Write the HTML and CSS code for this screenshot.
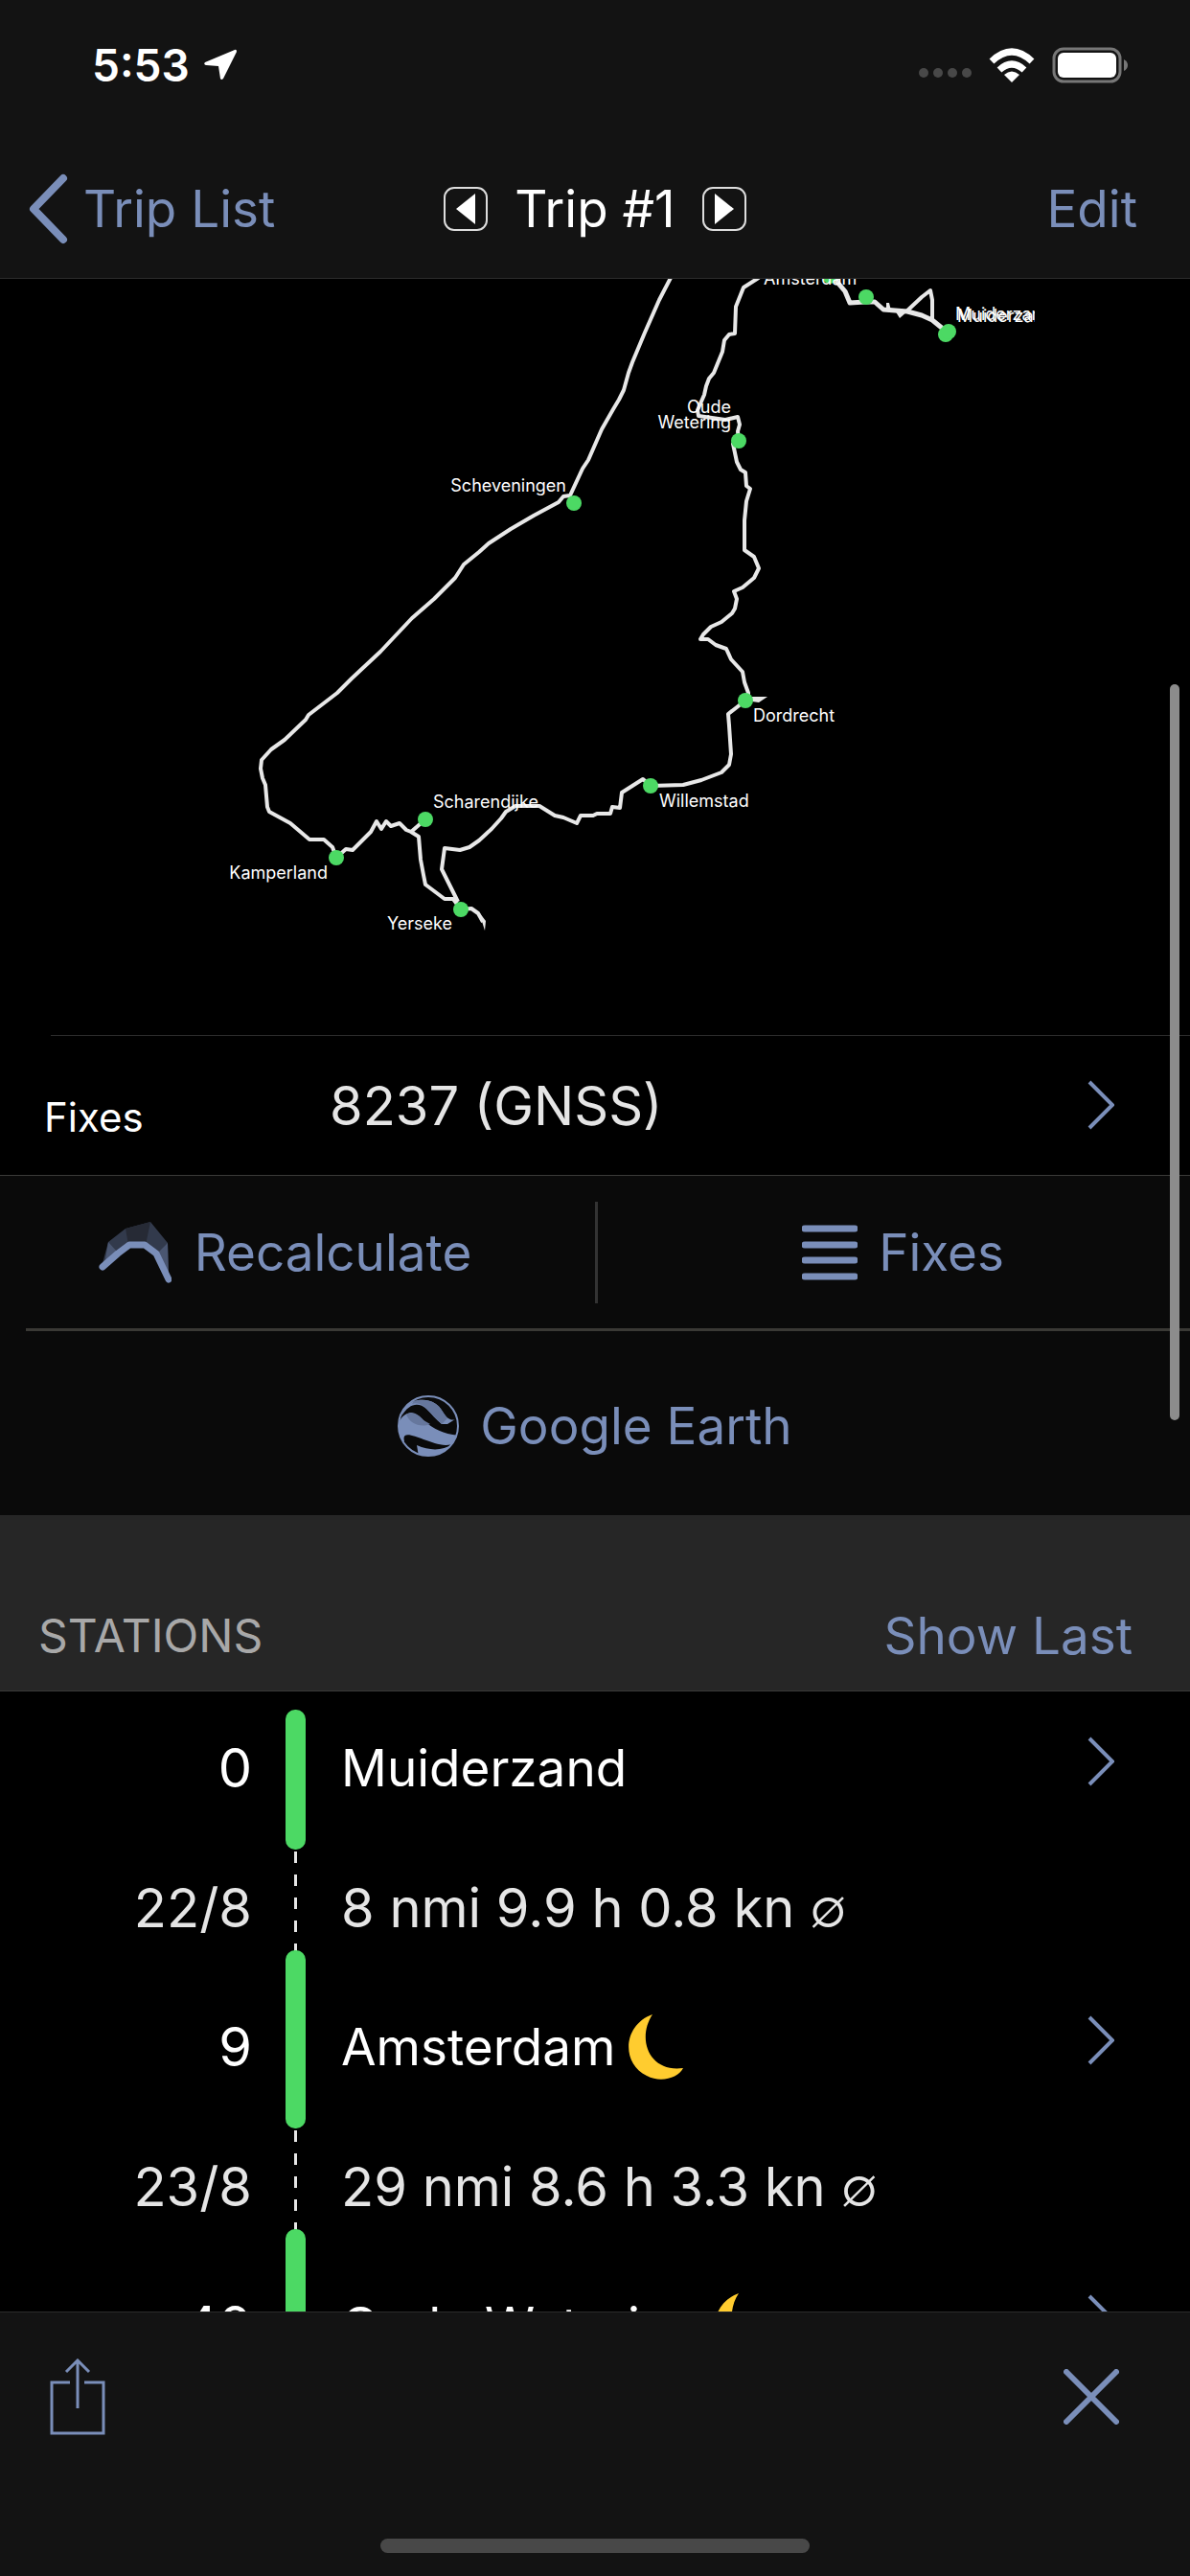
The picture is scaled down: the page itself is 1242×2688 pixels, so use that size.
FILE: index.html
```html
<!DOCTYPE html>
<html lang="en">
<head>
    <meta charset="UTF-8">
    <meta name="viewport" content="width=device-width, initial-scale=1.0">
    <title>Trip #1</title>
    <link rel="stylesheet" href="styles.css">
</head>
<body>
    <header>
        <div class="status-bar">
            <div class="status-left">
                <span>5:53</span>
                <svg width="36" height="34" viewBox="0 0 36 34"><path d="M33 1 L2 14 Q0 16 3 17 L16 18 L18 31 Q19 33 21 31 L35 3 Q35 0 33 1 Z" fill="#fff"/></svg>
            </div>
            <div class="status-right">
                <span class="signal"><i></i><i></i><i></i><i></i></span>
                <svg width="48" height="37" viewBox="0 0 48 37">
                    <path d="M24 36 L16 28 Q24 21 32 28 Z" fill="#fff"/>
                    <path d="M11 23 Q24 11 37 23" fill="none" stroke="#fff" stroke-width="7"/>
                    <path d="M3 14 Q24 -6 45 14" fill="none" stroke="#fff" stroke-width="7"/>
                </svg>
                <svg width="80" height="38" viewBox="0 0 80 38">
                    <rect x="2" y="2" width="69" height="34" rx="10" fill="none" stroke="#777" stroke-width="3"/>
                    <rect x="6" y="6" width="61" height="26" rx="6" fill="#fff"/>
                    <path d="M75 13 Q79 15 79 19 Q79 23 75 25 Z" fill="#777"/>
                </svg>
            </div>
        </div>
        <nav>
            <a href="#trips" class="back">
                <svg width="42" height="74" viewBox="0 0 42 74"><path d="M37 5 L6 37 L37 69" fill="none" stroke="#7a8eb9" stroke-width="8" stroke-linecap="round" stroke-linejoin="round"/></svg>
                Trip List
            </a>
            <div class="trip-title">
                <button type="button" class="step" aria-label="Previous trip"><svg width="20" height="32" viewBox="0 0 20 32"><path d="M20 0 V32 L0 16 Z" fill="#fff"/></svg></button>
                <h1>Trip #1</h1>
                <button type="button" class="step" aria-label="Next trip"><svg width="20" height="32" viewBox="0 0 20 32"><path d="M0 0 V32 L20 16 Z" fill="#fff"/></svg></button>
            </div>
            <button type="button" class="edit">Edit</button>
        </nav>
    </header>

    <main>
        <svg class="map" viewBox="0 291 1242 789">
            <defs>
                <clipPath id="label-clip"><rect x="990" y="310" width="90" height="40"/></clipPath>
            </defs>
            <g class="route">
                <!-- North Sea coast -->
                <polyline points="702,286 688,313 673,347 660,378 656,389 651,407 646,417 640,427 628,448 614,480 608,489 595,517 588,518 583,524 557,538 533,552 510,567 500,576 484,589 475,603 453,625 430,645 397,680 367,708 352,723 322,746 319,751 297,772 283,782 273,793 272,802 274,812 277,819 279,842 281,847 303,859 323,876 338,876 347,884 351,895"/>
                <!-- Kamperland to Yerseke -->
                <polyline points="351,895 361,886 368,887 387,868 393,857 398,865 403,857 408,862 417,859 424,866 429,868 437,873 439,897 442,913 444,923 464,938 473,938 481,949 492,948 499,953 504,962"/>
                <polyline points="429,868 444,855"/>
                <!-- Yerseke to Dordrecht -->
                <polyline points="478,941 470,925 461,907 464,885 480,887 490,884 500,877 513,865 523,854 528,847 538,841 563,841 579,851 588,853 602,859 606,851 619,851 623,849 637,849 639,842 647,843 649,827 671,813 679,820 713,819 732,814 753,806 761,798 763,787 761,757 760,745 778,731"/>
                <!-- Dordrecht to Amsterdam -->
                <polyline points="781,731 781,723 777,712 775,701 763,688 758,677 747,673 739,667 731,667 734,662 742,654 753,649 764,640 767,635 769,625 766,617 775,613 787,603 792,593 787,581 777,574 777,543 779,523 783,510 779,507 778,493 773,490 769,482 765,463 771,460 770,450 772,443 770,435 757,438 729,434 728,428 735,412 737,403 740,395 745,389 754,367 756,355 761,349 767,348 768,320 776,300 790,291 800,284"/>
                <!-- Amsterdam to Muiderzand -->
                <polyline class="double" points="865,284 882,304 887,316 903,315 913,315 922,323 947,325 962,329 973,334 989,347"/>
                <polyline points="946,325 962,310 971,303 973,313 973,334"/>
            </g>
            <g fill="#e8e8e8">
                <path d="M500 952 L507 961 L506 971 Z"/>
                <path d="M785 727 H801 L792 733 L785 732 Z"/>
                <path d="M934 324 L939 332 L947 325 Z"/>
                <path d="M925 316 H928 L930 324 H925 Z"/>
            </g>
            <g fill="#4cd964">
                <circle cx="599" cy="525" r="8"/>
                <circle cx="444" cy="855" r="8"/>
                <circle cx="351" cy="895" r="8"/>
                <circle cx="481" cy="949" r="8"/>
                <circle cx="679" cy="820" r="8"/>
                <circle cx="778" cy="731" r="8"/>
                <circle cx="771" cy="460" r="8"/>
                <circle cx="866" cy="288" r="8"/>
                <circle cx="904" cy="310" r="8"/>
                <circle cx="987" cy="349" r="8"/>
                <circle cx="990" cy="346" r="8"/>
            </g>
            <g class="labels">
                <text x="797" y="297">Amsterdam</text>
                <text x="591" y="513" text-anchor="end">Scheveningen</text>
                <text x="763" y="431" text-anchor="end">Oude</text>
                <text x="763" y="447" text-anchor="end">Wetering</text>
                <text x="786" y="753">Dordrecht</text>
                <text x="688" y="842">Willemstad</text>
                <text x="452" y="843">Scharendijke</text>
                <text x="342" y="917" text-anchor="end">Kamperland</text>
                <text x="472" y="970" text-anchor="end">Yerseke</text>
                <g clip-path="url(#label-clip)">
                    <text x="997" y="334">Muiderzand</text>
                    <text x="999" y="336">Muiderzand</text>
                </g>
            </g>
        </svg>

        <a href="#fixes" class="fixes-row">
            <span class="fixes-label">Fixes</span>
            <span class="fixes-value">8237 (GNSS)</span>
            <svg class="chevron" width="28" height="52" viewBox="0 0 28 52"><path d="M2 2 L26 26 L2 50"/></svg>
        </a>

        <div class="actions">
            <div class="actions-top">
                <button type="button" class="recalc">
                    <svg width="76" height="64" viewBox="0 0 76 64">
                        <path d="M3 47 L10 21 L28 7 L54 0 L72 22 L73 60 L60 32 L48 24 H30 Z" fill="#323a4c"/>
                        <path d="M28 7 L54 0 L49 24 H31 Z" fill="#262a35"/>
                        <path d="M6 45 L10 21 L19 31 Z M72 22 L73 58 L62 32 Z" fill="#4a5671"/>
                        <path d="M4 47 L20 33 L32 24 H48 L60 33 L73 60" fill="none" stroke="#7a8eb9" stroke-width="7" stroke-linecap="round" stroke-linejoin="round"/>
                    </svg>
                    Recalculate
                </button>
                <button type="button" class="list">
                    <svg width="58" height="60" viewBox="0 0 58 60"><path d="M3 5 H55 M3 22 H55 M3 38 H55 M3 55 H55" stroke="#7a8eb9" stroke-width="7" stroke-linecap="round"/></svg>
                    Fixes
                </button>
            </div>
            <button type="button" class="earth">
                <svg width="64" height="64" viewBox="0 0 64 64">
                    <defs><clipPath id="globe"><circle cx="32" cy="32" r="31"/></clipPath></defs>
                    <g clip-path="url(#globe)">
                        <path d="M0 30 C8 14 18 17 27 26 C38 36 48 40 64 42 V48 C50 56 40 50 27 46 C16 42 4 37 7 48 L0 50 Z" fill="#7a8eb9"/>
                        <path d="M17 6 C32 2 42 8 47 17 C51 24 56 27 60 25 L52 30 L46 30 C40 25 36 20 30 14 C22 7 12 8 4 22 C6 14 11 8 17 6 Z" fill="#7a8eb9"/>
                        <path d="M17 6 C32 2 42 8 47 17 L52 24 L46 30 C40 25 36 20 30 14 C26 9 20 7 15 9 Z" fill="#66779d"/>
                        <path d="M9 20 C15 15 22 20 27 26 L34 30 C24 34 13 30 9 20 Z" fill="#66779d"/>
                        <path d="M20 52 C34 58 46 58 58 51 L50 64 H22 Z" fill="#7a8eb9"/>
                    </g>
                    <circle cx="32" cy="32" r="31" fill="none" stroke="#7a8eb9" stroke-width="2"/>
                </svg>
                Google Earth
            </button>
        </div>

        <div class="section-header">
            <h2>STATIONS</h2>
            <button type="button">Show Last</button>
        </div>

        <ul class="stations">
            <li class="station first">
                <span class="num">0</span>
                <span class="bar"></span>
                <span class="name">Muiderzand</span>
                <svg class="chevron" width="28" height="52" viewBox="0 0 28 52"><path d="M2 2 L26 26 L2 50"/></svg>
            </li>
            <li class="leg">
                <span class="num">22/8</span>
                <span class="dash"></span>
                <span class="name">8 nmi 9.9 h 0.8 kn <span class="avg">∅</span></span>
            </li>
            <li class="station">
                <span class="num">9</span>
                <span class="bar"></span>
                <span class="name">Amsterdam<svg width="58" height="70" viewBox="0 0 58 70"><path d="M25 1 C-6 12 -8 52 19 65 C34 73 52 67 57 57 C22 62 8 27 25 1 Z" fill="#ffcc2f"/></svg></span>
                <svg class="chevron" width="28" height="52" viewBox="0 0 28 52"><path d="M2 2 L26 26 L2 50"/></svg>
            </li>
            <li class="leg">
                <span class="num">23/8</span>
                <span class="dash"></span>
                <span class="name">29 nmi 8.6 h 3.3 kn <span class="avg">∅</span></span>
            </li>
            <li class="station">
                <span class="num">40</span>
                <span class="bar"></span>
                <span class="name">Oude Wetering<svg width="58" height="70" viewBox="0 0 58 70"><path d="M25 1 C-6 12 -8 52 19 65 C34 73 52 67 57 57 C22 62 8 27 25 1 Z" fill="#ffcc2f"/></svg></span>
                <svg class="chevron" width="28" height="52" viewBox="0 0 28 52"><path d="M2 2 L26 26 L2 50"/></svg>
            </li>
        </ul>
        <div class="scroll-thumb"></div>
    </main>

    <footer>
        <div class="tools">
            <button type="button" aria-label="Share"><svg width="58" height="80" viewBox="0 0 58 80"><path d="M21 25 H2 V78 H56 V25 H36 M29 52 V2 M17 14 L29 2 L41 14" fill="none" stroke="#7a8eb9" stroke-width="3"/></svg></button>
            <button type="button" aria-label="Close"><svg width="58" height="58" viewBox="0 0 58 58"><path d="M3 3 L55 55 M55 3 L3 55" stroke="#7a8eb9" stroke-width="6" stroke-linecap="round"/></svg></button>
        </div>
        <div class="home-indicator"></div>
    </footer>
</body>
</html>
```

FILE: styles.css
```css
* {
    box-sizing: border-box;
}
body {
    font-family: Inter, "Liberation Sans", sans-serif;
    font-size: 53px;
    line-height: 66px;
    margin: 0;
    height: 100vh;
    display: flex;
    flex-direction: column;
    background-color: #000;
    color: #fff;
}
svg {
    display: block;
    flex-shrink: 0;
}
h1, h2 {
    margin: 0;
    font-size: 53px;
    font-weight: 400;
}
a {
    color: #7a8eb9;
    text-decoration: none;
}
button {
    font: inherit;
    color: #7a8eb9;
    background: none;
    border: 0;
    margin: 0;
    padding: 0;
}
header {
    background-color: #131313;
    border-bottom: 1px solid #2c2c2c;
}
.status-bar {
    display: flex;
    justify-content: space-between;
    align-items: center;
    height: 146px;
    padding: 0 64px 10px 96px;
}
.status-left {
    display: flex;
    align-items: center;
    gap: 14px;
    font-size: 46px;
    font-weight: 600;
}
.status-right {
    display: flex;
    align-items: center;
    gap: 18px;
}
.signal {
    display: flex;
    gap: 5px;
    padding-top: 16px;
}
.signal i {
    width: 10px;
    height: 10px;
    border-radius: 50%;
    background-color: #484848;
}
nav {
    display: grid;
    grid-template-columns: 1fr auto 1fr;
    align-items: center;
    height: 144px;
    padding: 0 29px;
}
.back {
    display: flex;
    align-items: center;
    gap: 16px;
}
.trip-title {
    display: flex;
    align-items: center;
    gap: 28px;
}
.step {
    display: flex;
    align-items: center;
    justify-content: center;
    width: 46px;
    height: 46px;
    border: 2px solid #ddd;
    border-radius: 11px;
}
.edit {
    justify-self: end;
    margin-right: 26px;
}
main {
    flex: 1;
    min-height: 0;
    overflow: hidden;
    position: relative;
}
.map {
    width: 100%;
    height: auto;
}
.route {
    fill: none;
    stroke: #e8e8e8;
    stroke-width: 4;
    stroke-linejoin: round;
}
.route .double {
    stroke-width: 5;
}
.labels {
    fill: #fff;
    font-size: 18px;
}
.chevron {
    fill: none;
    stroke: #7a8eb9;
    stroke-width: 4;
}
.fixes-row {
    display: grid;
    grid-template-columns: 298px 1fr auto;
    align-items: center;
    height: 146px;
    padding: 0 79px 0 46px;
    background: linear-gradient(#2c2c2c, #2c2c2c) 53px 0 / 100% 1px no-repeat;
}
.fixes-label {
    color: #fff;
    font-size: 42px;
    padding-top: 26px;
}
.fixes-value {
    color: #e5e5e5;
    font-size: 56px;
    padding-top: 2px;
}
.actions {
    background-color: #0a0a0a;
    border-top: 1px solid #3a3a38;
}
.actions-top {
    display: grid;
    grid-template-columns: 1fr 1fr;
    height: 159px;
}
.actions button {
    display: flex;
    align-items: center;
    justify-content: center;
}
.actions .recalc {
    gap: 24px;
    position: relative;
    padding-right: 26px;
}
.recalc::after {
    content: "";
    position: absolute;
    right: -3px;
    width: 3px;
    height: 106px;
    background-color: #333;
}
.actions .list {
    gap: 22px;
    padding-left: 22px;
}
.actions .earth {
    width: 100%;
    height: 195px;
    gap: 22px;
    padding-top: 8px;
    background: linear-gradient(#3a3935, #3a3935) 27px 0 / 100% 3px no-repeat;
}
.section-header {
    display: flex;
    justify-content: space-between;
    align-items: flex-end;
    height: 184px;
    padding: 0 60px 24px 40px;
    background-color: #262626;
    border-bottom: 1px solid #3a3a38;
}
.section-header h2 {
    font-size: 48px;
    color: #a8a8a8;
}
.stations {
    list-style: none;
    margin: 0;
    padding: 0;
}
.stations li {
    display: grid;
    grid-template-columns: 263px 91px 1fr auto;
    align-items: center;
    padding-right: 79px;
}
.station {
    height: 146px;
}
.leg {
    height: 145px;
    color: #e5e5e5;
    font-size: 56px;
}
.num {
    text-align: right;
    padding-top: 14px;
    font-size: 56px;
}
.bar {
    align-self: stretch;
    justify-self: center;
    width: 21px;
    margin: -21px 0 -19px;
    border-radius: 10px;
    background-color: #4cd964;
    z-index: 1;
}
.first .bar {
    margin-top: 19px;
}
.dash {
    align-self: stretch;
    justify-self: center;
    width: 3px;
    margin-top: 21px;
    background: repeating-linear-gradient(#e5e5e5 0 12px, transparent 12px 24px);
}
.name {
    display: flex;
    align-items: center;
    padding: 14px 0 0 2px;
    white-space: pre;
}
.name svg {
    margin-left: 14px;
}
.avg {
    font-weight: 300;
}
.scroll-thumb {
    position: absolute;
    top: 423px;
    right: 11px;
    width: 10px;
    height: 768px;
    border-radius: 5px;
    background-color: #8c8c8c;
}
footer {
    height: 276px;
    padding: 48px 0 24px;
    background-color: #131313;
    border-top: 1px solid #2c2c2c;
    display: flex;
    flex-direction: column;
    justify-content: space-between;
}
.tools {
    display: flex;
    justify-content: space-between;
    align-items: center;
    padding: 0 74px 0 52px;
}
.home-indicator {
    align-self: center;
    width: 36vw;
    height: 15px;
    border-radius: 8px;
    background-color: #484848;
}
```
